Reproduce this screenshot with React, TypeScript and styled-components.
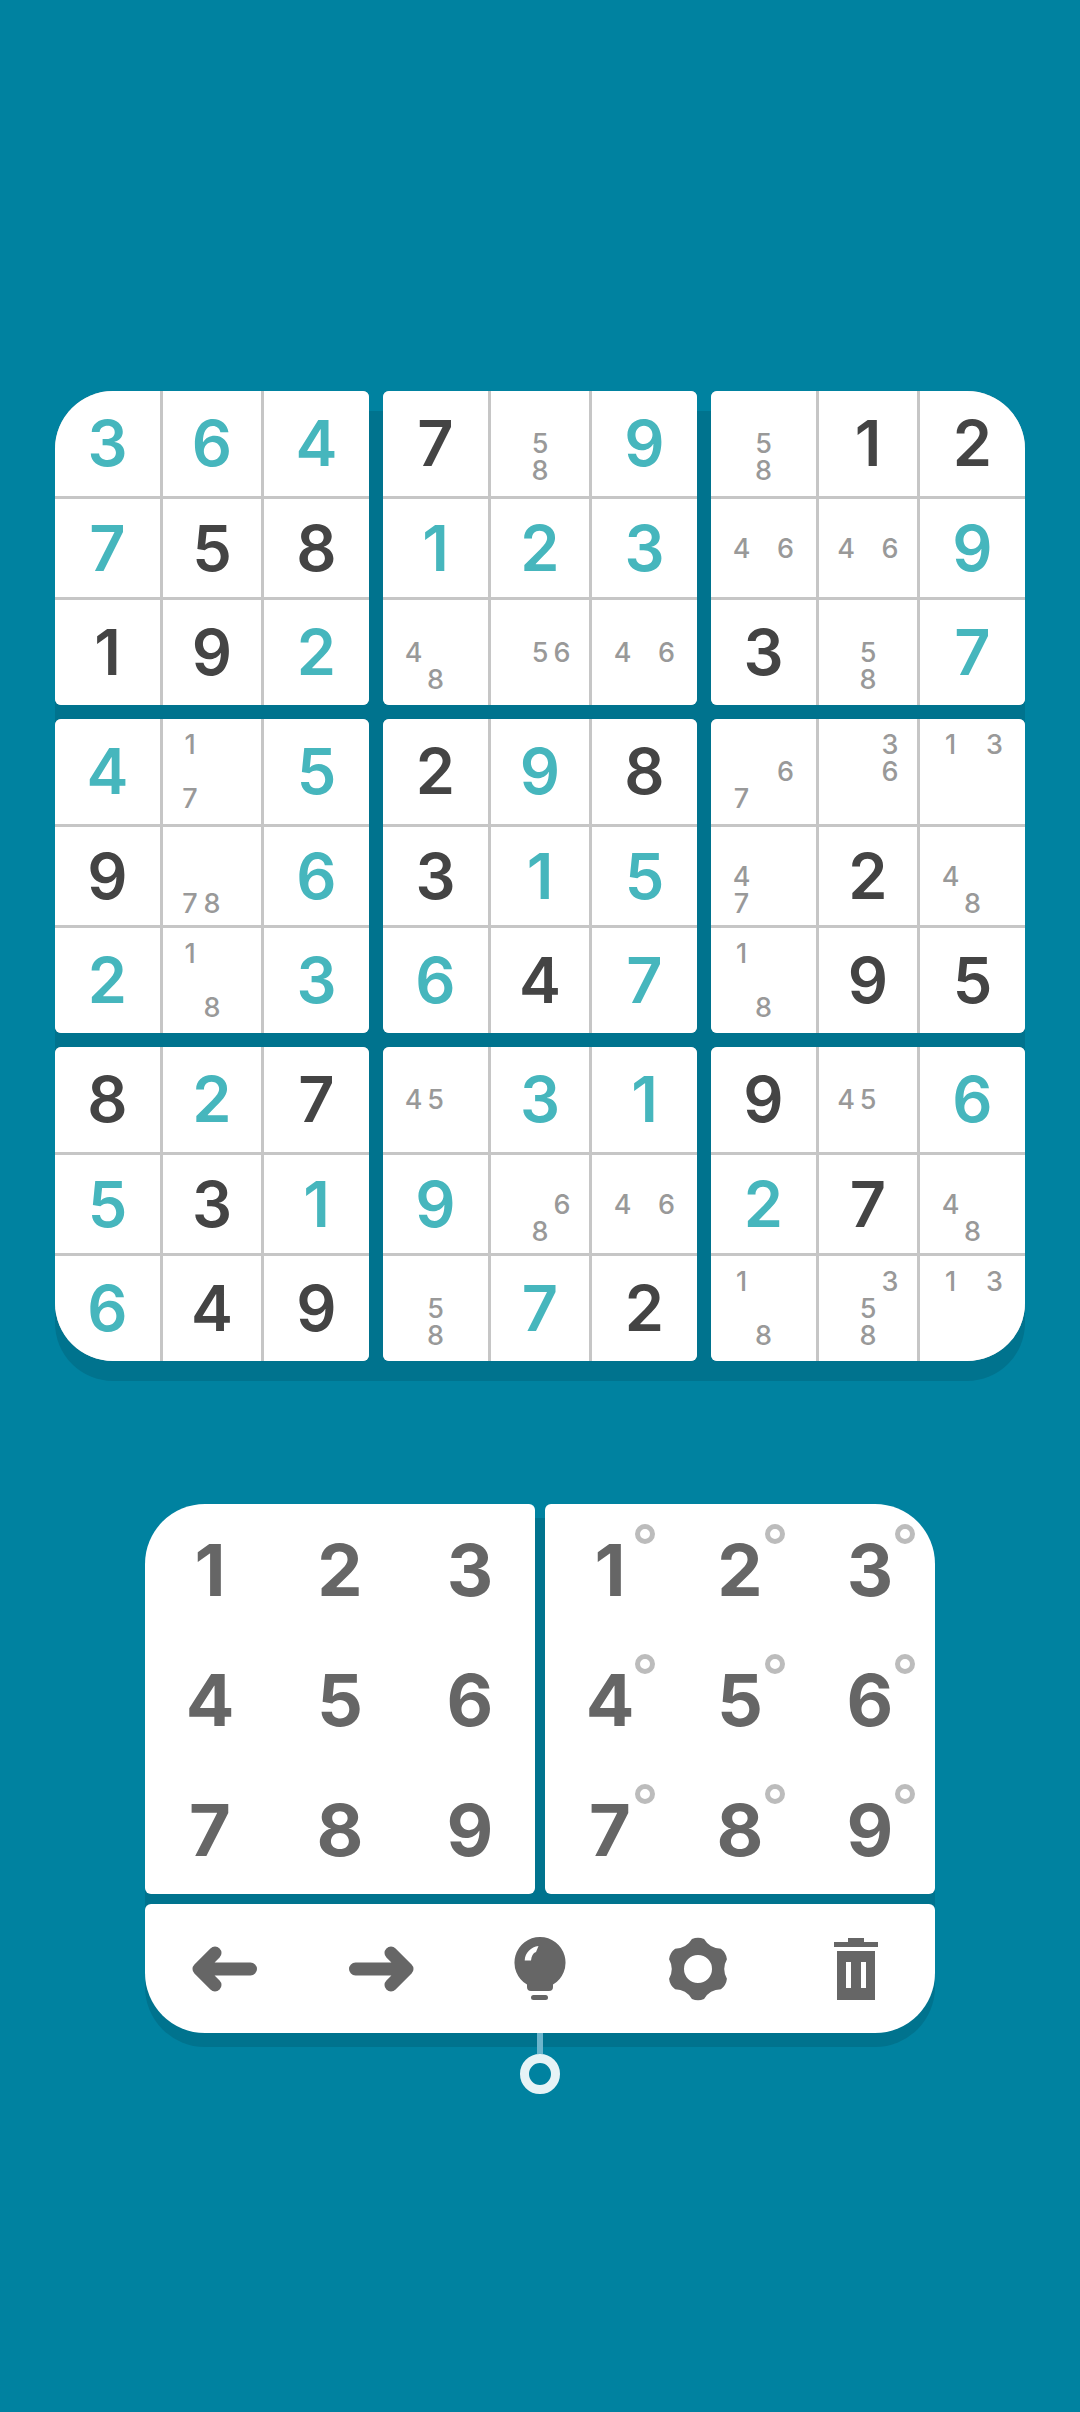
import React from 'react';
import styled, { createGlobalStyle } from 'styled-components';

type Cell = { v?: number; given?: boolean; marks?: number[] };

const t = (v: number): Cell => ({ v, given: true });
const d = (v: number): Cell => ({ v });
const m = (...marks: number[]): Cell => ({ marks });

// nine boxes, left to right, top to bottom
const boxes: Cell[][] = [
  [t(3), t(6), t(4), t(7), d(5), d(8), d(1), d(9), t(2)],
  [d(7), m(5, 8), t(9), t(1), t(2), t(3), m(4, 8), m(5, 6), m(4, 6)],
  [m(5, 8), d(1), d(2), m(4, 6), m(4, 6), t(9), d(3), m(5, 8), t(7)],
  [t(4), m(1, 7), t(5), d(9), m(7, 8), t(6), t(2), m(1, 8), t(3)],
  [d(2), t(9), d(8), d(3), t(1), t(5), t(6), d(4), t(7)],
  [m(6, 7), m(3, 6), m(1, 3), m(4, 7), d(2), m(4, 8), m(1, 8), d(9), d(5)],
  [d(8), t(2), d(7), t(5), d(3), t(1), t(6), d(4), d(9)],
  [m(4, 5), t(3), t(1), t(9), m(6, 8), m(4, 6), m(5, 8), t(7), d(2)],
  [d(9), m(4, 5), t(6), t(2), d(7), m(4, 8), m(1, 8), m(3, 5, 8), m(1, 3)],
];

const digits = [1, 2, 3, 4, 5, 6, 7, 8, 9];

const gearPath = () => {
  const cx = 32;
  const cy = 32;
  const pt = (a: number, r: number) =>
    `${(cx + r * Math.cos(a)).toFixed(2)} ${(cy + r * Math.sin(a)).toFixed(2)}`;
  let path = '';
  for (let i = 0; i < 6; i++) {
    const a = -Math.PI / 2 + (i * Math.PI) / 3;
    const w = 0.2;
    if (i === 0) path += `M${pt(a - w, 30.5)}`;
    path += ` Q${pt(a, 32.6)} ${pt(a + w, 30.5)}`;
    path += ` Q${pt(a + Math.PI / 6, 23.5)} ${pt(a + Math.PI / 3 - w, 30.5)}`;
  }
  path += 'Z M18 32 a14 14 0 1 0 28 0 a14 14 0 1 0 -28 0Z';
  return path;
};

const App = () => (
  <Page>
    <GlobalStyle />
    <Board>
      {boxes.map((box, b) => (
        <Box key={b} $corner={b}>
          {box.map((cell, i) => (
            <Square key={i}>
              {cell.v ? (
                <Value $given={cell.given}>{cell.v}</Value>
              ) : (
                <Marks>
                  {cell.marks?.map((n) => (
                    <Mark key={n} $n={n}>
                      {n}
                    </Mark>
                  ))}
                </Marks>
              )}
            </Square>
          ))}
        </Box>
      ))}
    </Board>

    <Controls>
      <Pads>
        <Pad $side="left">
          {digits.map((n) => (
            <Key key={n}>{n}</Key>
          ))}
        </Pad>
        <Pad $side="right">
          {digits.map((n) => (
            <Key key={n}>
              {n}
              <PencilDot />
            </Key>
          ))}
        </Pad>
      </Pads>
      <Actions>
        <Action>
          <svg width="66" height="46" viewBox="0 0 66 46" fill="none" stroke="#666" strokeWidth="13" strokeLinecap="round" strokeLinejoin="round">
            <path d="M59.5 23H8M24 7L8 23l16 16" />
          </svg>
        </Action>
        <Action>
          <svg width="66" height="46" viewBox="0 0 66 46" fill="none" stroke="#666" strokeWidth="13" strokeLinecap="round" strokeLinejoin="round">
            <path d="M6.5 23H58M42 7l16 16-16 16" />
          </svg>
        </Action>
        <Action>
          <svg width="52" height="64" viewBox="0 0 52 64" fill="#666">
            <path d="M26 0a25.6 25.6 0 0 1 13 47.6V50a4 4 0 0 1-4 4H17a4 4 0 0 1-4-4v-2.400A25.600 25.600 0 0 1 26 0z" />
            <rect x="17" y="58" width="17" height="5" rx="2.5" />
            <path fill="#fff" d="M10.700 23.500C11 15.500 17 10 24.500 9L22 15c-3 1-4.500 4-5 8.500z" />
          </svg>
        </Action>
        <Action>
          <svg width="64" height="64" viewBox="0 0 64 64" fill="#666">
            <path fillRule="evenodd" d={gearPath()} />
          </svg>
        </Action>
        <Action>
          <svg width="44" height="62" viewBox="0 0 44 62" fill="#666">
            <path d="M14 0h16v4H14zM0 4h44v5H0z" />
            <path fillRule="evenodd" d="M3 13h38v49H3zM12 24v26h5V24zM27 24v26h5V24z" />
          </svg>
        </Action>
      </Actions>
      <Connector>
        <Stem />
        <Ring />
      </Connector>
    </Controls>
  </Page>
);

export default App;

const GlobalStyle = createGlobalStyle`
  html, body {
    margin: 0;
    padding: 0;
    background: #0082a0;
  }
  * {
    box-sizing: border-box;
  }
`;

const Page = styled.main`
  width: 1080px;
  height: 2412px;
  padding-top: 391px;
  background: #0082a0;
  display: flex;
  flex-direction: column;
  align-items: center;
  font-family: Inter, 'Noto Sans', sans-serif;
  overflow: hidden;
`;

const Board = styled.section`
  position: relative;
  z-index: 0;
  width: 970px;
  display: grid;
  grid-template-columns: repeat(3, 314px);
  grid-auto-rows: 314px;
  gap: 14px;
  &::before {
    content: '';
    position: absolute;
    z-index: -1;
    inset: 20px 0 -20px;
    border-radius: 58px;
    background: #00738e;
  }
`;

const cornerRadius = (b: number) => {
  if (b === 0) return '58px 6px 6px 6px';
  if (b === 2) return '6px 58px 6px 6px';
  if (b === 6) return '6px 6px 6px 58px';
  if (b === 8) return '6px 6px 58px 6px';
  return '6px';
};

const Box = styled.div<{ $corner: number }>`
  display: grid;
  grid-template-columns: 105px 98px 105px;
  grid-template-rows: 105px 98px 105px;
  gap: 3px;
  background: #c6c6c6;
  border-radius: ${(p) => cornerRadius(p.$corner)};
  overflow: hidden;
`;

const Square = styled.div`
  background: #fff;
  display: flex;
  align-items: center;
  justify-content: center;
`;

const Value = styled.span<{ $given?: boolean }>`
  font-size: 63px;
  font-weight: 600;
  line-height: 1;
  color: ${(p) => (p.$given ? '#46b6bd' : '#444')};
`;

const Marks = styled.div`
  display: grid;
  grid-template-columns: repeat(3, 22px);
  grid-template-rows: repeat(3, 27px);
`;

const Mark = styled.span<{ $n: number }>`
  grid-column: ${(p) => ((p.$n - 1) % 3) + 1};
  grid-row: ${(p) => Math.floor((p.$n - 1) / 3) + 1};
  font-size: 27px;
  font-weight: 500;
  line-height: 27px;
  text-align: center;
  color: #999;
`;

const Controls = styled.section`
  margin-top: 143px;
  width: 790px;
  position: relative;
  z-index: 0;
  display: flex;
  flex-direction: column;
  &::before {
    content: '';
    position: absolute;
    z-index: -1;
    top: 14px;
    left: 0;
    right: 0;
    height: 529px;
    border-radius: 60px;
    background: #00738e;
  }
`;

const Pads = styled.div`
  display: grid;
  grid-template-columns: 390px 390px;
  gap: 10px;
`;

const Pad = styled.div<{ $side: 'left' | 'right' }>`
  height: 390px;
  background: #fff;
  border-radius: ${(p) => (p.$side === 'left' ? '60px 6px 6px 6px' : '6px 60px 6px 6px')};
  display: grid;
  grid-template-columns: repeat(3, 130px);
  grid-template-rows: repeat(3, 130px);
`;

const Key = styled.div`
  position: relative;
  display: flex;
  align-items: center;
  justify-content: center;
  padding-top: 1px;
  font-size: 72px;
  font-weight: 700;
  line-height: 1;
  color: #666;
`;

const PencilDot = styled.span`
  position: absolute;
  top: 20px;
  left: 90px;
  width: 20px;
  height: 20px;
  border: 5.500px solid #bcbcbc;
  border-radius: 50%;
`;

const Actions = styled.div`
  margin-top: 10px;
  height: 129px;
  background: #fff;
  border-radius: 6px 6px 60px 60px;
  display: grid;
  grid-template-columns: repeat(5, 1fr);
`;

const Action = styled.div`
  display: flex;
  align-items: center;
  justify-content: center;
`;

const Connector = styled.div`
  display: flex;
  flex-direction: column;
  align-items: center;
`;

const Stem = styled.div`
  width: 6px;
  height: 21px;
  background: #6db5cc;
`;

const Ring = styled.div`
  width: 40px;
  height: 40px;
  border: 9px solid #e6f3f6;
  border-radius: 50%;
`;
